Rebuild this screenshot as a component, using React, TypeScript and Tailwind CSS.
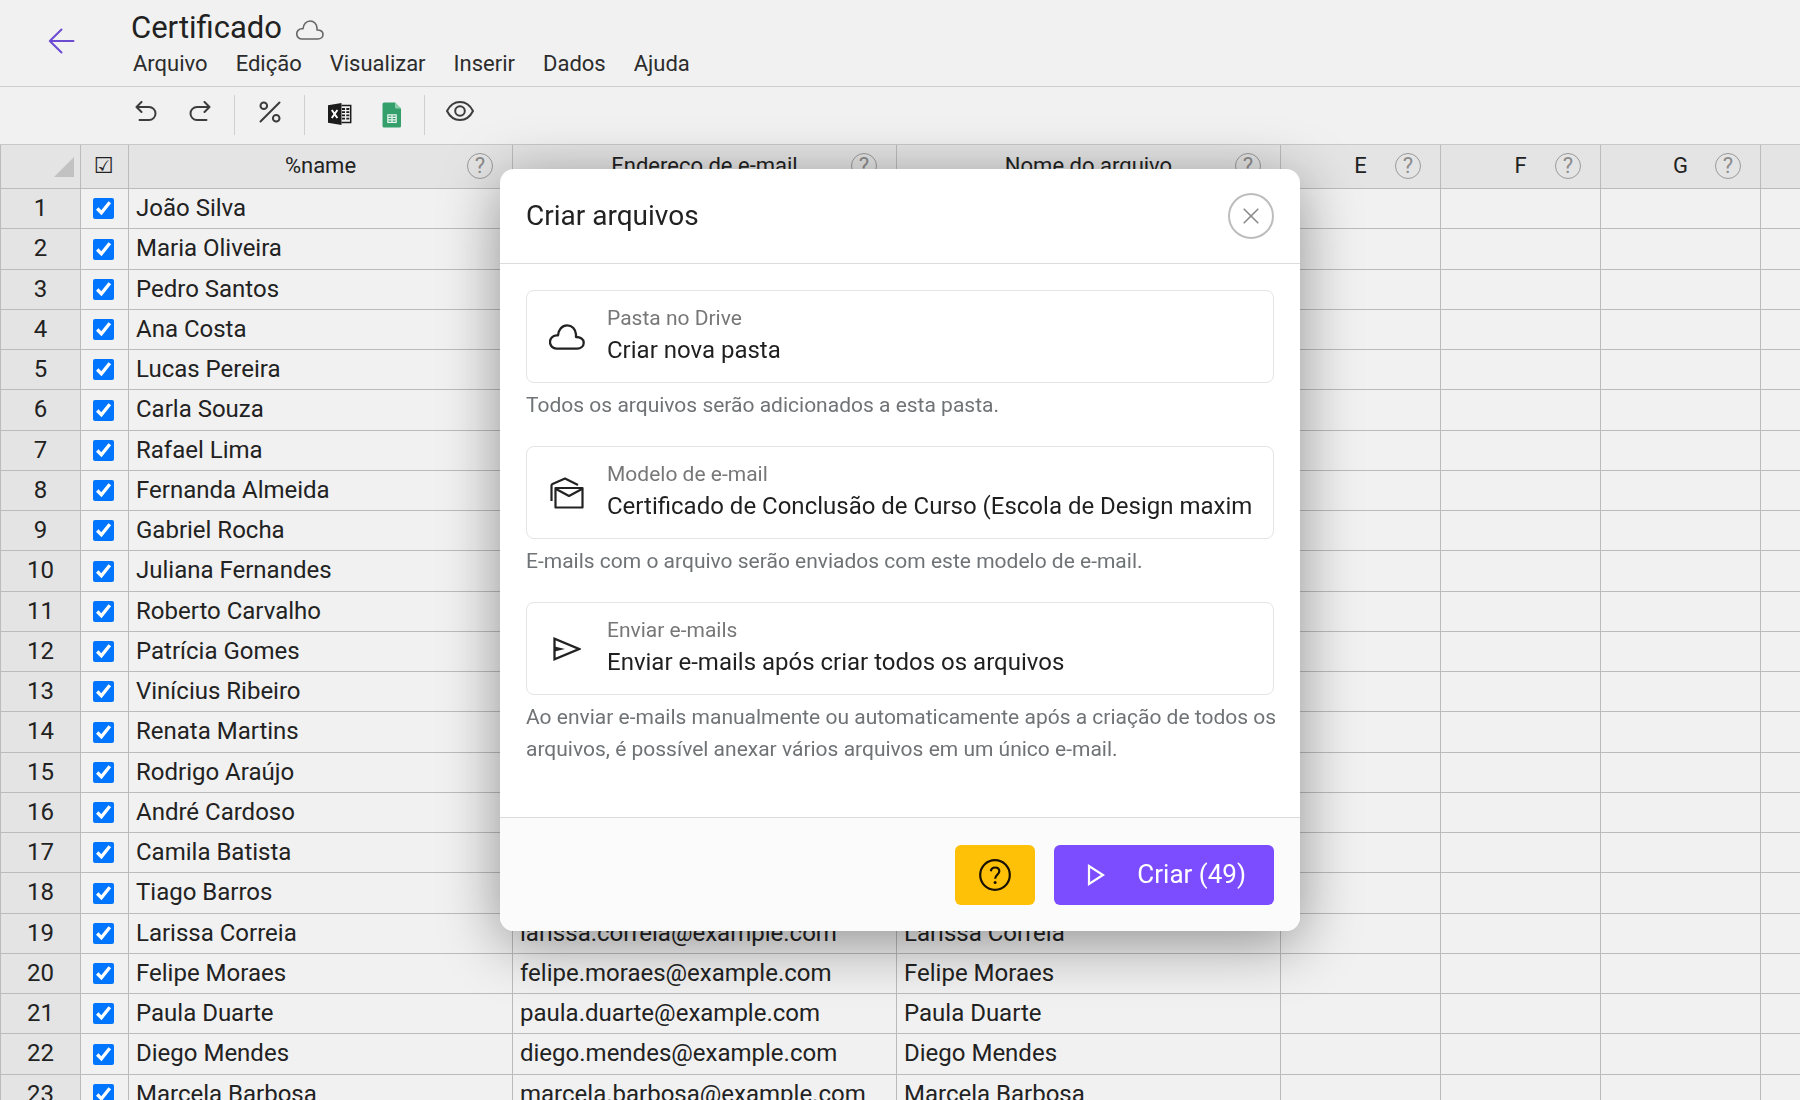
import React, { useState } from "react";

const menus = ["Arquivo", "Edição", "Visualizar", "Inserir", "Dados", "Ajuda"];

const columns = [
  { title: "%name", width: "w-[384px]" },
  { title: "Endereço de e-mail", width: "w-[384px]" },
  { title: "Nome do arquivo", width: "w-[384px]" },
  { title: "E", width: "w-[160px]" },
  { title: "F", width: "w-[160px]" },
  { title: "G", width: "w-[160px]" },
];

const names = [
  "João Silva",
  "Maria Oliveira",
  "Pedro Santos",
  "Ana Costa",
  "Lucas Pereira",
  "Carla Souza",
  "Rafael Lima",
  "Fernanda Almeida",
  "Gabriel Rocha",
  "Juliana Fernandes",
  "Roberto Carvalho",
  "Patrícia Gomes",
  "Vinícius Ribeiro",
  "Renata Martins",
  "Rodrigo Araújo",
  "André Cardoso",
  "Camila Batista",
  "Tiago Barros",
  "Larissa Correia",
  "Felipe Moraes",
  "Paula Duarte",
  "Diego Mendes",
  "Marcela Barbosa",
];

// "João Silva" -> "joao.silva@example.com"
const toEmail = (name: string) =>
  name
    .normalize("NFD")
    .replace(/[\u0300-\u036f]/g, "")
    .toLowerCase()
    .replace(" ", ".") + "@example.com";

const CloudIcon = ({ className }: { className: string }) => (
  <svg
    viewBox="0 0 28 20"
    fill="none"
    stroke="currentColor"
    strokeLinejoin="round"
    className={className}
  >
    <path d="M6 19a5.1 5.1 0 0 1-.3-10.200h1.300C7.300 4.400 10.200 1 14.100 1c3.900 0 6.700 3 6.900 7v2c3.400 0 6 1.500 6 4.400 0 2.800-2.300 4.600-5.200 4.600z" />
  </svg>
);

const MailsIcon = () => (
  <svg
    viewBox="0 0 34 32"
    fill="none"
    stroke="currentColor"
    strokeWidth="2.200"
    strokeLinejoin="round"
    className="h-8 w-[34px]"
  >
    <path d="M1.500 24V8.500q0-1 1-1.500L15 1.500 28 8" />
    <path d="M5.500 11h27v19.500h-27z" />
    <path d="m6 12 13 7 13-7" />
  </svg>
);

const SendIcon = () => (
  <svg
    viewBox="0 0 28 24"
    fill="none"
    stroke="currentColor"
    strokeWidth="2.300"
    className="h-6 w-7"
  >
    <path d="M1.500 1.800v20.400L26 12z" />
    <path d="M1.500 9.500 12 12l-10.500 2.500z" fill="currentColor" stroke="none" />
  </svg>
);

const UndoIcon = ({ className }: { className: string }) => (
  <svg
    viewBox="0 0 22 20"
    fill="none"
    stroke="currentColor"
    strokeWidth="2"
    strokeLinecap="round"
    strokeLinejoin="round"
    className={className}
  >
    <path d="M6.500 1 1.500 6l5 5M1.500 6H14a6.500 6.500 0 0 1 0 13H4.500" />
  </svg>
);

const PercentIcon = () => (
  <svg
    viewBox="0 0 22 22"
    fill="none"
    stroke="currentColor"
    strokeWidth="2"
    strokeLinecap="round"
    className="h-[22px] w-[22px]"
  >
    <circle cx="4.800" cy="4.800" r="3.300" />
    <circle cx="17.200" cy="17.200" r="3.300" />
    <path d="M20.500 1.500 1.500 20.500" />
  </svg>
);

const ExcelIcon = () => (
  <svg viewBox="0 0 24 24" className="h-6 w-6">
    <path d="M0 3.200 13.500 1v22L0 20.800z" fill="#1c1c1c" />
    <path d="M13.500 3.500h9.200v17h-9.200" fill="none" stroke="#1c1c1c" strokeWidth="1.500" />
    <path
      d="M14 7h3M14 10.200h3M14 13.400h3M14 16.600h3M18.300 7h3M18.300 10.200h3M18.300 13.400h3M18.300 16.600h3"
      stroke="#1c1c1c"
      strokeWidth="1.800"
    />
    <path d="m3.800 8 5.600 8M9.400 8l-5.600 8" stroke="#fff" strokeWidth="2" />
  </svg>
);

const SheetsIcon = () => (
  <svg viewBox="0 0 20 26" className="h-[26px] w-5">
    <path
      d="M2 .5h11l6 6V24q0 1.500-1.500 1.500H2Q.5 25.500.5 24V2Q.5.5 2 .5z"
      fill="#349f6b"
    />
    <path d="M13 .5V5q0 1.500 1.500 1.500H19z" fill="#8fd0ac" />
    <path
      d="M5.800 12.800h8.400v7.600H5.800zM10 12.800v7.600M5.800 15.300h8.400M5.800 17.900h8.400"
      fill="none"
      stroke="#e9f5ee"
      strokeWidth="1.200"
    />
  </svg>
);

const EyeIcon = () => (
  <svg
    viewBox="0 0 28 20"
    fill="none"
    stroke="currentColor"
    strokeWidth="2"
    strokeLinejoin="round"
    className="h-5 w-7"
  >
    <path d="M1 10c2.500-5 7-9 13-9s10.500 4 13 9c-2.500 5-7 9-13 9S3.500 15 1 10z" />
    <circle cx="14" cy="10" r="4.800" />
  </svg>
);

const HelpMark = () => (
  <button
    type="button"
    className="flex h-[26px] w-[26px] items-center justify-center justify-self-end rounded-full border border-[#9a9a9a] text-[22px] leading-6 text-[#8c8c8c]"
  >
    ?
  </button>
);

const Header = () => (
  <header className="flex h-[87px] shrink-0 border-b border-[#cfcfcf]">
    <a href="#" aria-label="Voltar" className="mt-7 ml-12 h-[26px] w-7 text-[#6a4bd2]">
      <svg
        viewBox="0 0 28 26"
        fill="none"
        stroke="currentColor"
        strokeWidth="2"
        strokeLinecap="round"
        strokeLinejoin="round"
      >
        <path d="M13.500 1.500 1.800 13l11.700 11.500M1.800 13H25.500" />
      </svg>
    </a>
    <div className="ml-[55px] pt-2">
      <div className="flex items-center gap-[14px]">
        <h1 className="text-[31px] leading-10">Certificado</h1>
        <CloudIcon className="mt-1 h-5 w-7 stroke-[1.6] text-[#666]" />
      </div>
      <nav className="flex gap-7 pl-[2px] text-[22px] leading-8 text-[#2c2c2c]">
        {menus.map((menu) => (
          <button key={menu} type="button">
            {menu}
          </button>
        ))}
      </nav>
    </div>
  </header>
);

const Toolbar = () => (
  <div className="flex h-[58px] shrink-0 items-start border-b border-[#c8c8c8] pt-2 pl-[135px] text-[#3c3c3c]">
    <div className="flex h-10 gap-8 border-r border-[#cfcfcf] pt-[6px] pr-[23px]">
      <button type="button" aria-label="Desfazer" className="self-start">
        <UndoIcon className="h-5 w-[22px]" />
      </button>
      <button type="button" aria-label="Refazer" className="self-start">
        <UndoIcon className="h-5 w-[22px] -scale-x-100" />
      </button>
    </div>
    <div className="flex h-10 border-r border-[#cfcfcf] pt-[6px] pr-[23px] pl-6">
      <button type="button" aria-label="Campos" className="self-start">
        <PercentIcon />
      </button>
    </div>
    <div className="flex h-10 gap-[30px] border-r border-[#cfcfcf] pt-[7px] pr-[22px] pl-[23px]">
      <button type="button" aria-label="Excel" className="self-start">
        <ExcelIcon />
      </button>
      <button type="button" aria-label="Planilhas" className="self-start">
        <SheetsIcon />
      </button>
    </div>
    <button type="button" aria-label="Pré-visualizar" className="pt-[6px] pl-[21px]">
      <EyeIcon />
    </button>
  </div>
);

const Sheet = () => (
  <div className="min-h-0 flex-1 overflow-hidden">
    <table className="w-full table-fixed border-separate border-spacing-0 text-[#222]">
      <colgroup>
        <col className="w-[81px]" />
        <col className="w-[48px]" />
        {columns.map((column) => (
          <col key={column.title} className={column.width} />
        ))}
        <col />
      </colgroup>
      <thead>
        <tr className="h-11 bg-[#e4e4e4] text-[22px]">
          <th className="border-x border-b border-[#bbb] p-0">
            <svg viewBox="0 0 20 20" className="mr-[6px] ml-auto h-5 w-5">
              <path d="M20 0v20H0z" fill="#c2c2c2" />
            </svg>
          </th>
          <th className="border-r border-b border-[#bbb] p-0 pr-[2px] pb-[2px] font-['DejaVu_Sans'] font-normal">
            ☑
          </th>
          {columns.map((column) => (
            <th
              key={column.title}
              className="border-r border-b border-[#bbb] px-[19px] pt-0 pb-[2px] font-normal"
            >
              <div className="grid grid-cols-[1fr_auto_1fr] items-center leading-8">
                <span className="col-start-2">{column.title}</span>
                <HelpMark />
              </div>
            </th>
          ))}
          <th className="border-b border-[#bbb] p-0" />
        </tr>
      </thead>
      <tbody className="text-[24px] leading-8">
        {names.map((name, i) => (
          <tr key={name} className="h-10 nth-[4n+2]:h-[41px]">
            <th className="border-x border-b border-[#bbb] bg-[#e4e4e4] p-0 pb-[2px] font-normal">
              {i + 1}
            </th>
            <td className="border-r border-b border-[#bbb] p-0 pr-[2px]">
              <input
                type="checkbox"
                defaultChecked
                aria-label={name}
                className="mx-auto block h-[21px] w-[21px]"
              />
            </td>
            {columns.map((column, c) => (
              <td
                key={column.title}
                className="overflow-hidden border-r border-b border-[#bbb] px-[7px] pt-0 pb-[2px] whitespace-nowrap"
              >
                {c === 1 ? toEmail(name) : c < 3 ? name : ""}
              </td>
            ))}
            <td className="border-b border-[#bbb] p-0" />
          </tr>
        ))}
      </tbody>
    </table>
  </div>
);

type FieldProps = {
  id: string;
  label: string;
  value: string;
  help: string;
  icon: React.ReactNode;
};

const Field = ({ id, label, value, help, icon }: FieldProps) => (
  <div>
    <div className="flex h-[93px] items-center rounded-lg border border-[#e4e4e4] pr-[19px]">
      <div className="flex w-20 shrink-0 justify-center">{icon}</div>
      <div className="flex min-w-0 flex-1 flex-col pb-[6px]">
        <label htmlFor={id} className="text-[21px] leading-8 text-[#777]">
          {label}
        </label>
        <input
          id={id}
          readOnly
          defaultValue={value}
          className="h-8 w-full text-[24px] leading-8 text-[#1f1f1f] outline-none"
        />
      </div>
    </div>
    <p className="-mr-2 pt-[6px] text-[21px] leading-8 text-[#6f7375]">{help}</p>
  </div>
);

const CreateFilesModal = ({ onClose }: { onClose: () => void }) => (
  <div className="fixed inset-0 flex items-center justify-center">
    <div
      role="dialog"
      aria-labelledby="modal-title"
      className="w-full max-w-[800px] overflow-hidden rounded-[14px] bg-white shadow-[0_12px_60px_rgba(0,0,0,0.4)]"
    >
      <div className="flex h-[95px] items-center justify-between border-b border-[#dcdcdc] px-[26px]">
        <h2 id="modal-title" className="text-[28px] leading-8 text-[#222]">
          Criar arquivos
        </h2>
        <button
          type="button"
          aria-label="Fechar"
          onClick={onClose}
          className="flex h-[46px] w-[46px] items-center justify-center rounded-full border-2 border-[#bdbdbd] text-[#8a8a8a]"
        >
          <svg
            viewBox="0 0 16 16"
            stroke="currentColor"
            strokeWidth="1.600"
            strokeLinecap="round"
            className="h-4 w-4"
          >
            <path d="m1.200 1.200 13.600 13.600M14.800 1.200 1.200 14.800" />
          </svg>
        </button>
      </div>

      <div className="flex flex-col gap-[25px] px-[26px] pt-[26px] pb-[52px]">
        <Field
          id="folder"
          label="Pasta no Drive"
          value="Criar nova pasta"
          help="Todos os arquivos serão adicionados a esta pasta."
          icon={<CloudIcon className="h-[26px] w-9 stroke-[1.8]" />}
        />
        <Field
          id="template"
          label="Modelo de e-mail"
          value="Certificado de Conclusão de Curso (Escola de Design maxim"
          help="E-mails com o arquivo serão enviados com este modelo de e-mail."
          icon={<MailsIcon />}
        />
        <Field
          id="send"
          label="Enviar e-mails"
          value="Enviar e-mails após criar todos os arquivos"
          help="Ao enviar e-mails manualmente ou automaticamente após a criação de todos os arquivos, é possível anexar vários arquivos em um único e-mail."
          icon={<SendIcon />}
        />
      </div>

      <div className="flex h-[114px] items-center justify-end gap-[19px] border-t border-[#dcdcdc] bg-[#fbfbfb] px-[26px]">
        <button
          type="button"
          aria-label="Ajuda"
          className="flex h-[60px] w-20 items-center justify-center rounded-md bg-[#ffc107] text-[#1a1200]"
        >
          <svg
            viewBox="0 0 32 32"
            fill="none"
            stroke="currentColor"
            strokeWidth="2.200"
            className="h-8 w-8"
          >
            <circle cx="16" cy="16" r="14.800" />
            <path d="M11.800 12.200c.4-2.400 2-3.700 4.300-3.700 2.500 0 4.200 1.500 4.200 3.700 0 3.400-4.200 3.800-4.200 7.600" />
            <circle cx="16.100" cy="23.600" r="1.500" fill="currentColor" stroke="none" />
          </svg>
        </button>
        <button
          type="button"
          className="flex h-[60px] w-[220px] items-center justify-between rounded-md bg-[#7c4dff] pr-7 pl-[33px] text-[26px] text-white"
        >
          <svg
            viewBox="0 0 18 22"
            fill="none"
            stroke="currentColor"
            strokeWidth="2.200"
            className="h-[22px] w-[18px]"
          >
            <path d="M2 2v18l14-9z" />
          </svg>
          Criar (49)
        </button>
      </div>
    </div>
  </div>
);

const App = () => {
  const [open, setOpen] = useState(true);

  return (
    <div className="flex h-screen flex-col overflow-hidden bg-[#f1f1f1] font-[Roboto,sans-serif] text-[#222]">
      <Header />
      <Toolbar />
      <Sheet />
      {open && <CreateFilesModal onClose={() => setOpen(false)} />}
    </div>
  );
};

export default App;
